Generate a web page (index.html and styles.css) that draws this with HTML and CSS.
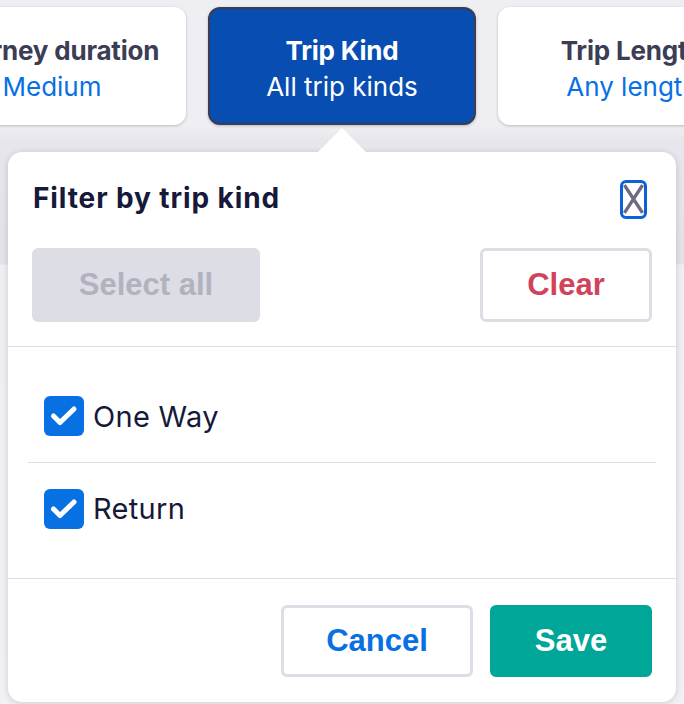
FILE: index.html
```html
<!DOCTYPE html>
<html lang="en">
<head>
<meta charset="utf-8">
<title>Trip kind filter</title>
<link rel="stylesheet" href="styles.css">
</head>
<body>
<div class="tabs">
  <div class="tab tab-left">
    <div class="tab-title">Journey duration</div>
    <div class="tab-value">Medium</div>
  </div>
  <div class="tab tab-active">
    <div class="tab-title">Trip Kind</div>
    <div class="tab-value">All trip kinds</div>
  </div>
  <div class="tab tab-right">
    <div class="tab-title">Trip Length</div>
    <div class="tab-value">Any length</div>
  </div>
</div>

<div class="popover">
  <div class="pop-head">
    <div class="head-row">
      <h2 class="pop-title">Filter by trip kind</h2>
      <button class="close" aria-label="Close">
        <svg width="22" height="34" viewBox="0 0 22 34"><path d="M1.5 2.5 L20.5 31.5 M20.5 2.5 L1.5 31.5" stroke="#6b6c82" stroke-width="3.6" fill="none"/></svg>
      </button>
    </div>
    <div class="head-actions">
      <button class="btn btn-disabled">Select all</button>
      <button class="btn btn-clear">Clear</button>
    </div>
  </div>
  <ul class="options">
    <li class="option">
      <span class="check"><svg width="40" height="40" viewBox="0 0 40 40"><polyline points="9.5,20 16,26.5 30,13" fill="none" stroke="#fff" stroke-width="5" stroke-linecap="round" stroke-linejoin="round"/></svg></span>
      <span class="option-label">One Way</span>
    </li>
    <li class="option">
      <span class="check"><svg width="40" height="40" viewBox="0 0 40 40"><polyline points="9.5,20 16,26.5 30,13" fill="none" stroke="#fff" stroke-width="5" stroke-linecap="round" stroke-linejoin="round"/></svg></span>
      <span class="option-label">Return</span>
    </li>
  </ul>
  <div class="pop-foot">
    <button class="btn btn-cancel">Cancel</button>
    <button class="btn btn-save">Save</button>
  </div>
</div>
</body>
</html>
```

FILE: styles.css
```css
html, body {
  margin: 0;
  padding: 0;
}
body {
  width: 684px;
  height: 704px;
  overflow: hidden;
  font-family: Inter, "Noto Sans", sans-serif;
  background: linear-gradient(to bottom, #eeeef3 0, #eeeef3 126px, #e6e6ec 140px, #e2e2e8 264px, #efeff2 265px, #f1f1f4 704px);
}

.tabs {
  display: grid;
  grid-template-columns: minmax(0, 1fr) 268px minmax(0, 1fr);
  column-gap: 22px;
  padding-top: 7px;
  height: 118px;
}
.tab {
  height: 118px;
  box-sizing: border-box;
  padding-top: 6px;
  border-radius: 12px;
  background: #fff;
  box-shadow: 0 1px 3px rgba(37, 32, 51, 0.25);
  display: flex;
  flex-direction: column;
  justify-content: center;
  align-items: center;
  font-size: 26px;
  line-height: 36px;
  white-space: nowrap;
}
.tab-left {
  width: 268px;
  justify-self: end;
}
.tab-right {
  width: 268px;
  justify-self: start;
}
.tab-title {
  font-weight: 700;
  color: #3b3d55;
  letter-spacing: -0.2px;
}
.tab-value {
  color: #0770e3;
}
.tab-active {
  background: #084eb2;
  border: 2px solid #3b3d55;
}
.tab-active .tab-title,
.tab-active .tab-value {
  color: #fff;
}

.popover {
  position: relative;
  margin: 27px 8px 0;
  height: 550px;
  background: #fff;
  border-radius: 14px;
  box-shadow: 0 1px 6px rgba(37, 32, 51, 0.18);
}
.popover::before {
  content: "";
  position: absolute;
  top: -24px;
  left: 50%;
  margin-left: -24px;
  border-left: 24px solid transparent;
  border-right: 24px solid transparent;
  border-bottom: 24px solid #fff;
}

.pop-head {
  padding: 24px 24px 24px 24px;
  border-bottom: 1px solid #dddde5;
}
.head-row {
  display: flex;
  justify-content: space-between;
  align-items: center;
  height: 44px;
}
.pop-title {
  margin: 0 0 0 1px;
  font-size: 28px;
  font-weight: 700;
  color: #161939;
  letter-spacing: 0.9px;
}
.close {
  width: 27px;
  height: 39px;
  margin: 2px 5px 0 0;
  padding: 0;
  border: 3px solid #0b62d6;
  border-radius: 6px;
  background: #fff;
  display: flex;
  align-items: center;
  justify-content: center;
}
.close svg {
  display: block;
}
.head-actions {
  margin-top: 28px;
  display: flex;
  justify-content: space-between;
}

.btn {
  box-sizing: border-box;
  height: 74px;
  border-radius: 6px;
  border: 3px solid transparent;
  font-family: "Liberation Sans", Arial, sans-serif;
  font-weight: 700;
  font-size: 31px;
  padding: 0;
}
.btn-disabled {
  width: 228px;
  background: #dddde5;
  border-color: #dddde5;
  color: #b2b2bf;
}
.btn-clear {
  width: 172px;
  background: #fff;
  border-color: #dddde5;
  color: #d1435b;
}

.options {
  list-style: none;
  margin: 0;
  padding: 23px 20px 24px;
}
.option {
  box-sizing: border-box;
  height: 92px;
  display: flex;
  align-items: center;
  padding-left: 16px;
}
.option + .option {
  border-top: 1px solid #dddde5;
}
.check {
  width: 40px;
  height: 40px;
  border-radius: 6px;
  background: #0770e3;
  display: block;
  flex: none;
}
.check svg {
  display: block;
}
.option-label {
  margin-left: 9px;
  font-size: 29px;
  letter-spacing: 0.3px;
  color: #161939;
}

.pop-foot {
  border-top: 1px solid #dddde5;
  padding: 26px 24px 25px;
  display: flex;
  justify-content: flex-end;
  gap: 17px;
}
.btn-cancel {
  width: 192px;
  height: 72px;
  background: #fff;
  border-color: #dddde5;
  color: #0770e3;
}
.btn-save {
  width: 162px;
  height: 72px;
  background: #00a698;
  border-color: #00a698;
  color: #fff;
}
```
